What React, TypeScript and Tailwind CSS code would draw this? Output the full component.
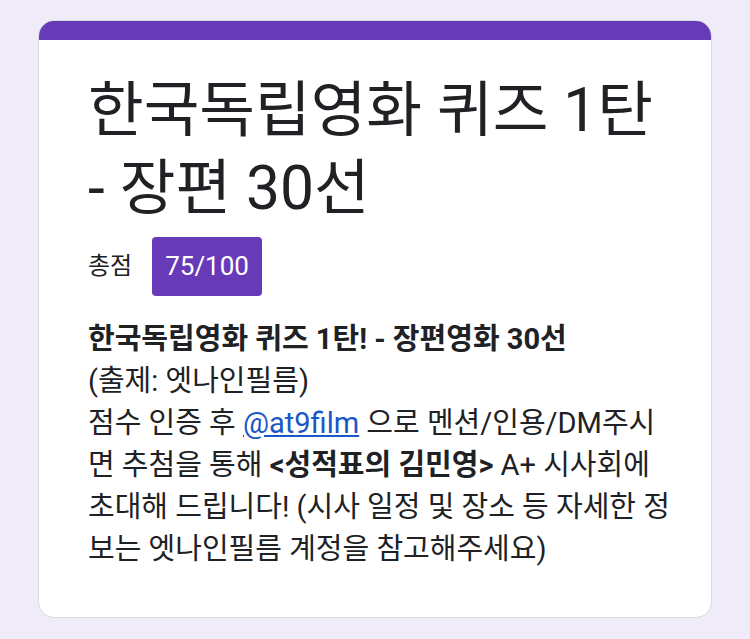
export default function App() {
  const font = { fontFamily: 'Roboto, "Noto Sans CJK KR", sans-serif' };
  return (
    <div className="w-[750px] h-[639px] bg-[#efebf8] pt-[20px] px-[38px]" style={font}>
      <div className="w-[674px] h-[598px] rounded-[16px] bg-white border border-[#dadce0] overflow-hidden flex flex-col">
        <div className="h-[20px] bg-[#673ab7] -mx-px -mt-px"></div>
        <div className="px-[49px] pt-[32px] text-[#202124]">
          <h1 className="text-[60.5px] leading-[78px] font-normal whitespace-nowrap">
            한국독립영화 퀴즈 1탄
            <br />- 장편 30선
          </h1>
          <div className="flex items-center mt-[8px] h-[60px]">
            <span className="text-[24px]">총점</span>
            <span className="ml-[20px] bg-[#673ab7] text-white text-[26px] rounded-[4px] px-[13px] h-[59px] flex items-center">
              75/100
            </span>
          </div>
          <div className="mt-[22px] text-[29px] leading-[42px] whitespace-nowrap">
            <div className="font-bold">한국독립영화 퀴즈 1탄! - 장편영화 30선</div>
            <div>(출제: 엣나인필름)</div>
            <div>
              점수 인증 후 <a className="text-[#1a56c6] underline">@at9film</a> 으로 멘션/인용/DM주시
            </div>
            <div>
              면 추첨을 통해 <b>&lt;성적표의 김민영&gt;</b> A+ 시사회에
            </div>
            <div>초대해 드립니다! (시사 일정 및 장소 등 자세한 정</div>
            <div>보는 엣나인필름 계정을 참고해주세요)</div>
          </div>
        </div>
      </div>
    </div>
  );
}
